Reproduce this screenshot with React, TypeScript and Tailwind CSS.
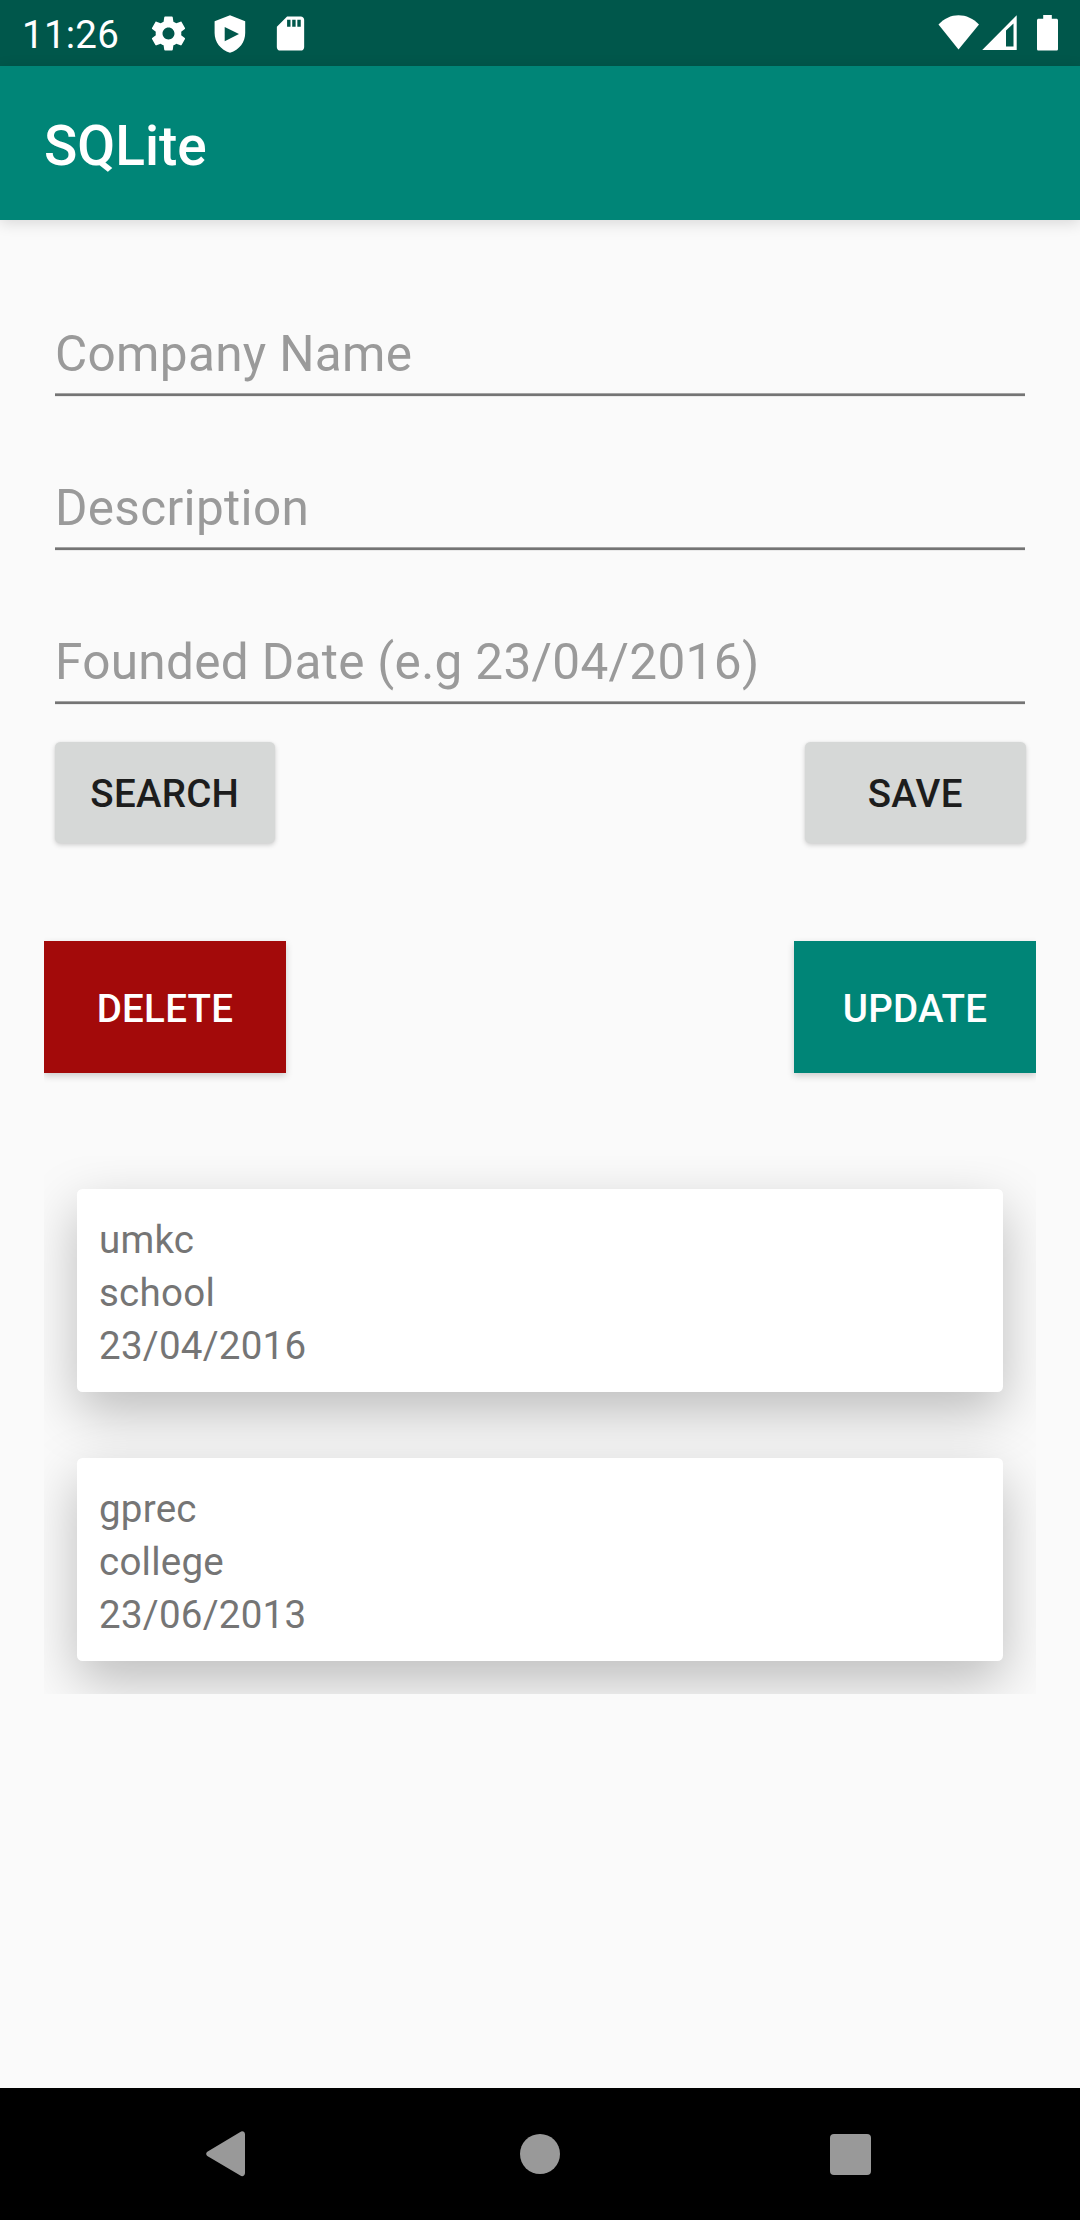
import React from "react";

const fields = ["Company Name", "Description", "Founded Date (e.g 23/04/2016)"];

const companies = [
  { name: "umkc", description: "school", founded: "23/04/2016" },
  { name: "gprec", description: "college", founded: "23/06/2013" },
];

function GearIcon() {
  return (
    <svg className="h-[41px] w-[41px]" viewBox="0 0 24 24" fill="currentColor">
      <path d="M19.43 12.98c.04-.32.07-.64.07-.98s-.03-.66-.07-.98l2.11-1.65c.19-.15.24-.42.12-.64l-2-3.46c-.12-.22-.39-.3-.61-.22l-2.49 1c-.52-.4-1.08-.73-1.69-.98l-.38-2.65C14.46 2.18 14.25 2 14 2h-4c-.25 0-.46.18-.49.42l-.38 2.65c-.61.25-1.17.59-1.69.98l-2.49-1c-.23-.09-.49 0-.61.22l-2 3.46c-.13.22-.07.49.12.64l2.11 1.65c-.04.32-.07.65-.07.98s.03.66.07.98l-2.11 1.65c-.19.15-.24.42-.12.64l2 3.46c.12.22.39.3.61.22l2.49-1c.52.4 1.08.73 1.69.98l.38 2.65c.03.24.24.42.49.42h4c.25 0 .46-.18.49-.42l.38-2.65c.61-.25 1.17-.59 1.69-.98l2.49 1c.23.09.49 0 .61-.22l2-3.46c.12-.22.07-.49-.12-.64l-2.11-1.65zM12 15.5c-1.93 0-3.5-1.57-3.5-3.5s1.57-3.5 3.5-3.5 3.5 1.57 3.5 3.5-1.57 3.5-3.5 3.5z" />
    </svg>
  );
}

function ShieldPlayIcon() {
  return (
    <svg className="h-[38px] w-[32px]" viewBox="0 0 32 38" fill="currentColor" fillRule="evenodd">
      <path d="M16 .3 31.2 6.2V18c0 9-5.700 16.800-15.200 19.800C6.500 34.800.6 27 .6 18V6.200ZM10.700 12v14.200L25 19Z" />
    </svg>
  );
}

function SdCardIcon() {
  return (
    <svg className="h-[41px] w-[41px]" viewBox="0 0 24 24" fill="currentColor">
      <path d="M18 2h-8L4.020 8 4 20c0 1.100.9 2 2 2h12c1.100 0 2-.9 2-2V4c0-1.100-.9-2-2-2zm-6 6h-2V4h2v4zm3 0h-2V4h2v4zm3 0h-2V4h2v4z" />
    </svg>
  );
}

function WifiIcon() {
  return (
    <svg className="h-[35px] w-[42px]" viewBox="0 0 42 35" fill="currentColor">
      <path d="M0.500 9.500C6 3.500 13 .2 20.500.2S35.500 3.500 41 9.500L20.500 34.600Z" />
    </svg>
  );
}

function SignalIcon() {
  return (
    <svg className="h-[35px] w-[35px]" viewBox="0 0 35 35" fill="currentColor" fillRule="evenodd">
      <path d="M34.700.3V35H.2ZM24 15.500V31.500H31.500V8.500Z" />
    </svg>
  );
}

function BatteryIcon() {
  return (
    <svg className="h-[36px] w-[21px]" viewBox="0 0 21 36" fill="currentColor">
      <path d="M6.200 0h8.600v3.800H19.400c.9 0 1.600.7 1.600 1.600V34c0 .9-.7 1.600-1.600 1.600H1.600C.7 35.600 0 34.900 0 34V5.400C0 4.500.7 3.800 1.600 3.800h4.600Z" />
    </svg>
  );
}

function StatusBar() {
  return (
    <div className="flex h-[66px] items-start justify-between bg-[#00574b] text-white">
      <div className="flex">
        <span className="ml-[22px] mt-[12px] w-[98px] text-[38.5px] leading-[45px] tracking-[0.25px]">11:26</span>
        <div className="ml-[28px] mt-[13px]"><GearIcon /></div>
        <div className="ml-[25px] mt-[14.500px]"><ShieldPlayIcon /></div>
        <div className="ml-[24px] mt-[13px]"><SdCardIcon /></div>
      </div>
      <div className="mr-[22px] mt-[15px] flex">
        <WifiIcon />
        <div className="ml-[2px]"><SignalIcon /></div>
        <div className="ml-[20px]"><BatteryIcon /></div>
      </div>
    </div>
  );
}

function Field({ hint }: { hint: string }) {
  return (
    <div className="flex h-[154px] flex-col px-[11px]">
      <span className="text-[49.5px] leading-[58px] tracking-[0.32px] text-[#9a9a9a]">{hint}</span>
      <div className="mt-[10px] h-[4px] border-b border-t border-b-[#eaeaea] border-t-[#a3a3a3] bg-[#747474]" />
    </div>
  );
}

function RaisedButton({ label }: { label: string }) {
  return (
    <button className="flex h-[101px] w-[220.500px] items-center justify-center rounded-[5.500px] bg-[#d6d8d7] pt-[2px] text-[38.5px] font-medium leading-[45px] tracking-[0.25px] text-[#1d1d1d] shadow-[0_2px_5px_rgba(0,0,0,0.18),0_0_2px_rgba(0,0,0,0.06)]">
      {label}
    </button>
  );
}

export default function App() {
  return (
    <div className="flex h-[2220px] w-[1080px] flex-col bg-[#fafafa] font-[Roboto,sans-serif]">
      <StatusBar />
      <header className="h-[154px] bg-[#008577] pl-[44px] pt-[48px] shadow-[0_3px_14px_rgba(0,0,0,0.14)]">
        <h1 className="text-[55px] font-medium leading-[64px] text-white">SQLite</h1>
      </header>

      <main className="flex flex-1 flex-col px-[44px] pt-[105px]">
        {fields.map((hint) => (
          <Field key={hint} hint={hint} />
        ))}

        <div className="mt-[-45px] flex justify-between px-[10.500px]">
          <RaisedButton label="SEARCH" />
          <RaisedButton label="SAVE" />
        </div>

        <div className="mt-[98px] flex justify-between overflow-x-clip text-[38.5px] font-medium leading-[45px] tracking-[0.25px] text-white">
          <button className="flex h-[132px] w-[242px] items-center justify-center bg-[#a30a0a] pt-[2px] shadow-[0_3px_7px_rgba(0,0,0,0.18)]">
            DELETE
          </button>
          <button className="flex h-[132px] w-[242px] items-center justify-center bg-[#008577] pt-[2px] shadow-[0_3px_7px_rgba(0,0,0,0.18)]">
            UPDATE
          </button>
        </div>

        <div className="mt-[83px] flex flex-col gap-[66px] overflow-hidden p-[33px]">
          {companies.map((company) => (
            <div
              key={company.name}
              className="h-[203px] rounded-[5.500px] bg-white px-[22px] pt-[24px] text-[38.5px] leading-[53px] tracking-[0.25px] text-[#757575] shadow-[0_20px_54px_rgba(0,0,0,0.25)]"
            >
              <p>{company.name}</p>
              <p>{company.description}</p>
              <p>{company.founded}</p>
            </div>
          ))}
        </div>
      </main>

      <nav className="flex h-[132px] items-center bg-black text-[#999999]">
        <svg className="ml-[206px] h-[46px] w-[40px]" viewBox="0 0 40 46" fill="currentColor">
          <path d="M1.300 20.700 34.300.9C36.500-.4 39 .8 39 3.500V42c0 2.700-2.500 3.900-4.700 2.600L1.300 24.900C-.2 24-.2 21.600 1.300 20.700Z" />
        </svg>
        <div className="ml-[274px] h-[40px] w-[40px] rounded-full bg-[#999999]" />
        <div className="ml-[270px] mt-[1px] h-[41px] w-[41px] rounded-[4px] bg-[#999999]" />
      </nav>
    </div>
  );
}
